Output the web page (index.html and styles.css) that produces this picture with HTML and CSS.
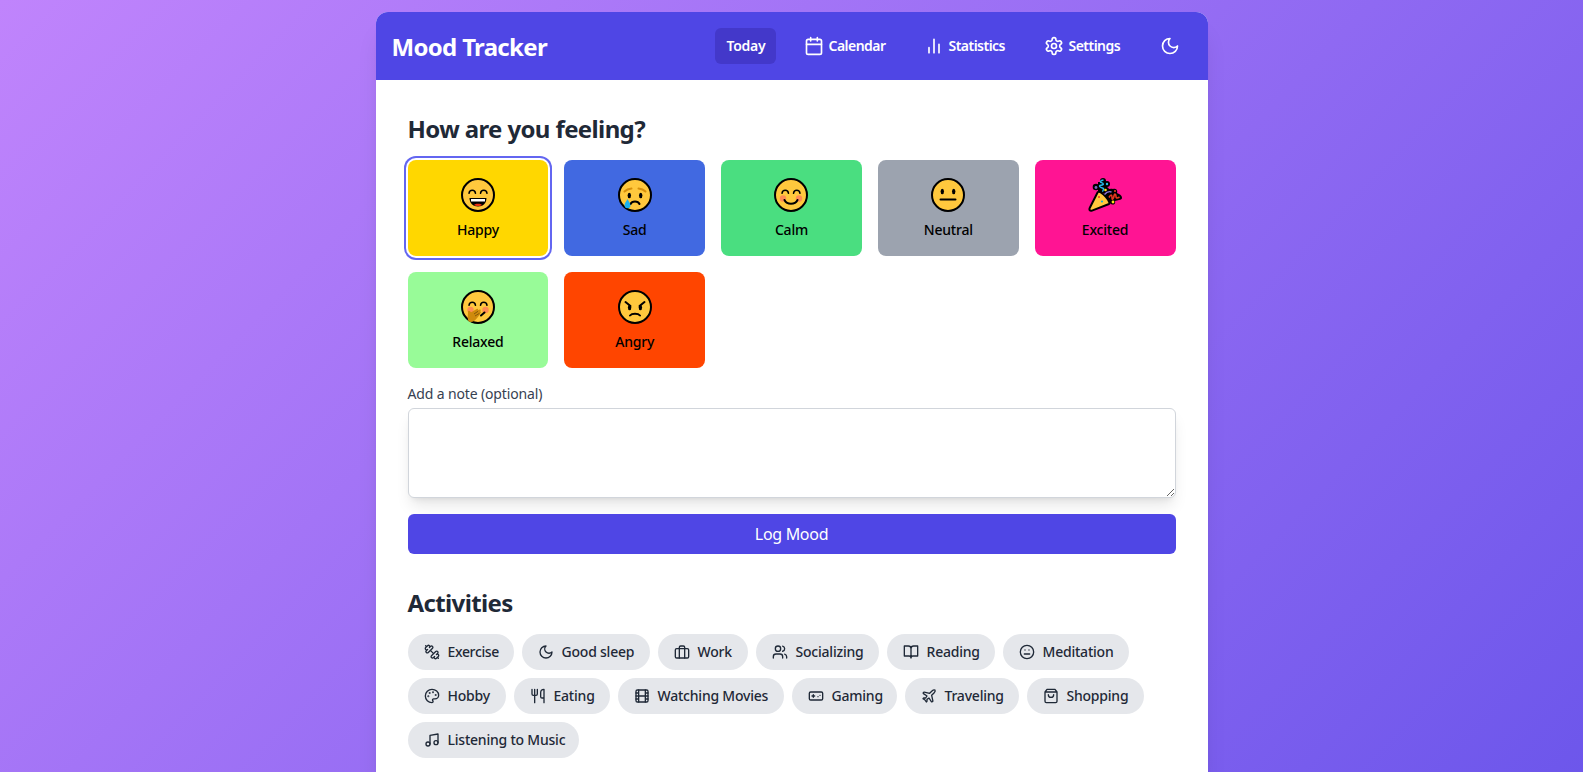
FILE: index.html
```html
<!DOCTYPE html>
<html lang="en">
<head>
<meta charset="utf-8">
<title>Mood Tracker</title>
<link rel="stylesheet" href="styles.css">
</head>
<body>
<div class="page">
<div class="app">
  <header class="header">
    <h1 class="brand">Mood Tracker</h1>
    <nav class="nav">
      <button class="nav-btn active"><span class="t-today">Today</span></button>
      <button class="nav-btn"><svg class="icon" viewBox="0 0 24 24"><path d="M8 2v4M16 2v4M3 10h18"/><rect x="3" y="4" width="18" height="18" rx="2"/></svg><span class="t-calendar">Calendar</span></button>
      <button class="nav-btn"><svg class="icon" viewBox="0 0 24 24"><path d="M18 20V10M12 20V4M6 20v-6"/></svg><span class="t-statistics">Statistics</span></button>
      <button class="nav-btn"><svg class="icon" viewBox="0 0 24 24"><path d="M12.22 2h-.44a2 2 0 0 0-2 2v.18a2 2 0 0 1-1 1.73l-.43.25a2 2 0 0 1-2 0l-.15-.08a2 2 0 0 0-2.73.73l-.22.38a2 2 0 0 0 .73 2.73l.15.1a2 2 0 0 1 1 1.72v.51a2 2 0 0 1-1 1.74l-.15.09a2 2 0 0 0-.73 2.73l.22.38a2 2 0 0 0 2.73.73l.15-.08a2 2 0 0 1 2 0l.43.25a2 2 0 0 1 1 1.73V20a2 2 0 0 0 2 2h.44a2 2 0 0 0 2-2v-.18a2 2 0 0 1 1-1.73l.43-.25a2 2 0 0 1 2 0l.15.08a2 2 0 0 0 2.73-.73l.22-.39a2 2 0 0 0-.73-2.73l-.15-.08a2 2 0 0 1-1-1.74v-.5a2 2 0 0 1 1-1.74l.15-.09a2 2 0 0 0 .73-2.73l-.22-.38a2 2 0 0 0-2.73-.73l-.15.08a2 2 0 0 1-2 0l-.43-.25a2 2 0 0 1-1-1.73V4a2 2 0 0 0-2-2z"/><circle cx="12" cy="12" r="3"/></svg><span class="t-settings">Settings</span></button>
      <button class="nav-btn" aria-label="Toggle dark mode"><svg class="icon" viewBox="0 0 24 24"><path d="M12 3a6 6 0 0 0 9 9 9 9 0 1 1-9-9Z"/></svg></button>
    </nav>
  </header>
  <main class="content">
    <section>
      <h2 class="title">How are you feeling?</h2>
      <div class="moods">
        <button class="mood happy selected">
          <svg class="emoji" viewBox="0 0 34 34"><circle class="face" cx="17" cy="17" r="16"/><path class="line" d="M8 15.300c.5-4 6-4 6.500 0M19.500 15.300c.5-4 6-4 6.500 0"/><path d="M8.500 20h17c0 5-3.500 8.500-8.500 8.500S8.500 25 8.500 20Z"/><path fill="#fff" d="M10 21h14v2.500H10Z"/><path fill="#ea2f10" d="M13 27.200c1-1.900 7-1.900 8 0-2 1-6 1-8 0Z"/></svg>
          <span class="mood-name">Happy</span>
        </button>
        <button class="mood sad">
          <svg class="emoji" viewBox="0 0 34 34"><circle class="face" cx="17" cy="17" r="16"/><path class="brow" d="M6.500 13.500c1.500-1.500 4-2.700 7-3M27.500 13.500c-1.500-1.500-4-2.700-7-3"/><ellipse cx="11.300" cy="17.500" rx="1.700" ry="2.700"/><ellipse cx="22.700" cy="17.500" rx="1.700" ry="2.700"/><path class="line thick" d="M12.500 26c1.500-3.400 7.500-3.400 9 0"/><path fill="#1bb1f0" d="M9.500 21c1.500 3 3 4.300 3 6.300a3 3 0 0 1-6 0c0-2 1.500-3.300 3-6.300Z"/></svg>
          <span class="mood-name">Sad</span>
        </button>
        <button class="mood calm">
          <svg class="emoji" viewBox="0 0 34 34"><circle class="face" cx="17" cy="17" r="16"/><g class="cheek"><circle cx="9" cy="20.500" r="3.200"/><circle cx="25" cy="20.500" r="3.200"/></g><path class="line" d="M8 15.300c.5-4 6-4 6.500 0M19.500 15.300c.5-4 6-4 6.500 0"/><path class="line thick" d="M10.500 22c2.500 5 10.500 5 13 0"/></svg>
          <span class="mood-name">Calm</span>
        </button>
        <button class="mood neutral">
          <svg class="emoji" viewBox="0 0 34 34"><circle class="face" cx="17" cy="17" r="16"/><ellipse cx="11.300" cy="13.500" rx="1.700" ry="2.700"/><ellipse cx="22.700" cy="13.500" rx="1.700" ry="2.700"/><path class="line thick" d="M9.500 21.500h15"/></svg>
          <span class="mood-name">Neutral</span>
        </button>
        <button class="mood excited">
          <svg class="emoji" viewBox="0 0 34 34"><g><circle cx="8" cy="9" r="3.300"/><circle cx="15" cy="3" r="3"/><circle cx="19" cy="6" r="3"/><path d="M10 4h9v11h-9Z"/><circle cx="18" cy="12" r="3"/><path d="M16 14c3-3 6-3.500 9-3 3-1 5 1 4 4l2 1c4 2 4 6 0 6l-4 1c1 4-3 4.500-5 2l-6-5Z"/></g><path fill="#ffc83d" stroke="#000" stroke-width="2" stroke-linejoin="round" d="M9.800 14 1.700 30c-.8 2 .3 3.200 2.300 2.600L21 26c2.700-1.500-8-14-11.200-12Z"/><g fill="none" stroke-width="1.400"><path stroke="#26b8ea" d="M15.500 2c-3 .5-4 2-2 2.700s3 2-.5 2.500 0 2.500 2 3-1 2.500 0 3.500"/><path stroke="#8b72d8" d="M16.500 16.500c2-2.500 4-3.500 7-2.500"/><path stroke="#e8371f" stroke-width="1.600" d="M21 19.500c2-3.500 3-3 3 0s1.500 1.500 2-1.500 2-2 2 .5 2 1.500 3.500.5"/></g><circle cx="8" cy="9.500" r="1.400" fill="#7965c5"/><circle cx="19" cy="6" r="1.200" fill="#26b8ea"/><circle cx="17.500" cy="12" r="1.300" fill="#ffe11a"/><circle cx="25" cy="24" r="1.400" fill="#ffe11a"/><circle cx="27" cy="13" r="1.100" fill="#e8371f"/><circle cx="11" cy="19" r="1" fill="#e8371f"/><circle cx="14" cy="23.500" r="1.100" fill="#1bb1d0"/></svg>
          <span class="mood-name">Excited</span>
        </button>
        <button class="mood relaxed">
          <svg class="emoji" viewBox="0 0 34 34"><circle class="face" cx="17" cy="17" r="16"/><g class="cheek"><circle cx="9.500" cy="20" r="3.200"/><circle cx="24.500" cy="20" r="3.200"/></g><path class="line" d="M8 15.300c.5-4 6-4 6.500 0M19.500 15.300c.5-4 6-4 6.500 0"/><path class="line thick" d="m20 25.500 3.500-3"/><path fill="#cf8a0c" d="M7 22c0-1.500 1.500-1.500 2.200-.5l1 .7 5.500-3.200c1.300-.5 2 .5 1 1.300l2-.8c1.300-.3 1.500 1 .5 1.500l.5.800c.7.800 0 1.400-.8 1.800.5.900 0 1.400-.8 1.800l-2 2.500c-2.500 3.500-5 4.500-7.900 3.900C6 30 7 25 7 22Z"/><path fill="none" stroke="#85590a" d="m13 24 4-2.700M14 26l4.500-2.700"/></svg>
          <span class="mood-name">Relaxed</span>
        </button>
        <button class="mood angry">
          <svg class="emoji" viewBox="0 0 34 34"><circle class="face" cx="17" cy="17" r="16"/><path class="line thick" d="m7.500 12 5 4M26.500 12l-5 4"/><ellipse cx="11.600" cy="17.500" rx="1.700" ry="2.700"/><ellipse cx="22.400" cy="17.500" rx="1.700" ry="2.700"/><path class="line thick" d="M12 25.500c2-2.500 8-2.500 10 0"/></svg>
          <span class="mood-name">Angry</span>
        </button>
      </div>
      <label class="note-label" for="note">Add a note (optional)</label>
      <textarea class="note" id="note"></textarea>
      <button class="log">Log Mood</button>
    </section>
    <section class="activities">
      <h2 class="title">Activities</h2>
      <div class="chips">
        <button class="chip exercise"><svg class="icon" viewBox="0 0 24 24"><path d="M14.400 14.400 9.600 9.600M18.657 21.485a2 2 0 1 1-2.829-2.828l-1.767 1.768a2 2 0 1 1-2.829-2.829l6.364-6.364a2 2 0 1 1 2.829 2.829l-1.768 1.767a2 2 0 1 1 2.828 2.829zM21.500 21.500l-1.400-1.400M3.900 3.900 2.500 2.500M6.404 12.768a2 2 0 1 1-2.829-2.829l1.768-1.767a2 2 0 1 1-2.828-2.829l2.828-2.828a2 2 0 1 1 2.829 2.828l1.767-1.768a2 2 0 1 1 2.829 2.829z"/></svg><span>Exercise</span></button>
        <button class="chip sleep"><svg class="icon" viewBox="0 0 24 24"><path d="M12 3a6 6 0 0 0 9 9 9 9 0 1 1-9-9Z"/></svg><span>Good sleep</span></button>
        <button class="chip work"><svg class="icon" viewBox="0 0 24 24"><rect x="2" y="7" width="20" height="14" rx="2"/><path d="M16 21V5a2 2 0 0 0-2-2h-4a2 2 0 0 0-2 2v16"/></svg><span>Work</span></button>
        <button class="chip social"><svg class="icon" viewBox="0 0 24 24"><path d="M16 21v-2a4 4 0 0 0-4-4H6a4 4 0 0 0-4 4v2M22 21v-2a4 4 0 0 0-3-3.870M16 3.130a4 4 0 0 1 0 7.750"/><circle cx="9" cy="7" r="4"/></svg><span>Socializing</span></button>
        <button class="chip reading"><svg class="icon" viewBox="0 0 24 24"><path d="M2 3h6a4 4 0 0 1 4 4v14a3 3 0 0 0-3-3H2zM22 3h-6a4 4 0 0 0-4 4v14a3 3 0 0 1 3-3h7z"/></svg><span>Reading</span></button>
        <button class="chip meditation"><svg class="icon" viewBox="0 0 24 24"><circle cx="12" cy="12" r="10"/><path d="M8 15h8M9 9h.01M15 9h.01"/></svg><span>Meditation</span></button>
        <button class="chip hobby"><svg class="icon" viewBox="0 0 24 24"><g fill="currentColor"><circle cx="13.500" cy="6.500" r=".5"/><circle cx="17.500" cy="10.500" r=".5"/><circle cx="8.500" cy="7.500" r=".5"/><circle cx="6.500" cy="12.500" r=".5"/></g><path d="M12 2C6.500 2 2 6.500 2 12s4.500 10 10 10c.926 0 1.648-.746 1.648-1.688 0-.437-.18-.835-.437-1.125-.29-.289-.438-.652-.438-1.125a1.640 1.640 0 0 1 1.668-1.668h1.996c3.051 0 5.555-2.503 5.555-5.554C21.965 6.012 17.461 2 12 2z"/></svg><span>Hobby</span></button>
        <button class="chip eating"><svg class="icon" viewBox="0 0 24 24"><path d="M3 2v7c0 1.100.9 2 2 2h4a2 2 0 0 0 2-2V2M7 2v20M21 15V2a5 5 0 0 0-5 5v6c0 1.100.9 2 2 2h3Zm0 0v7"/></svg><span>Eating</span></button>
        <button class="chip movies"><svg class="icon" viewBox="0 0 24 24"><rect x="3" y="3" width="18" height="18" rx="2"/><path d="M7 3v18M3 7.500h4M3 12h18M3 16.500h4M17 3v18M17 7.500h4M17 16.500h4"/></svg><span>Watching Movies</span></button>
        <button class="chip gaming"><svg class="icon" viewBox="0 0 24 24"><path d="M6 12h4M8 10v4M15 13h.01M18 11h.01"/><rect x="2" y="6" width="20" height="12" rx="2"/></svg><span>Gaming</span></button>
        <button class="chip traveling"><svg class="icon" viewBox="0 0 24 24"><path d="M17.800 19.200 16 11l3.500-3.500C21 6 21.500 4 21 3c-1-.5-3 0-4.500 1.500L13 8 4.800 6.200c-.5-.1-.9.1-1.100.5l-.3.5c-.2.5-.1 1 .3 1.300L9 12l-2 3H4l-1 1 3 2 2 3 1-1v-3l3-2 3.500 5.300c.3.4.8.5 1.300.3l.5-.2c.4-.3.6-.7.5-1.200z"/></svg><span>Traveling</span></button>
        <button class="chip shopping"><svg class="icon" viewBox="0 0 24 24"><path d="M6 2 3 6v14a2 2 0 0 0 2 2h14a2 2 0 0 0 2-2V6l-3-4ZM3 6h18M16 10a4 4 0 0 1-8 0"/></svg><span>Shopping</span></button>
        <button class="chip music"><svg class="icon" viewBox="0 0 24 24"><path d="M9 18V5l12-2v13"/><circle cx="6" cy="18" r="3"/><circle cx="18" cy="16" r="3"/></svg><span>Listening to Music</span></button>
      </div>
    </section>
  </main>
</div>
</div>
</body>
</html>
```
FILE: styles.css
```css
* { box-sizing: border-box; margin: 0; }
body { font-family: "Noto Sans", "Open Sans", sans-serif; color: #1f2937; }
button { border: 0; font: inherit; color: inherit; background: none; padding: 0; }
.page { height: 100vh; padding-top: 12px; overflow: hidden; background: linear-gradient(to bottom right, #c084fc, #4f46e5) 0 0 / 100% 1640px no-repeat; }
.app { width: 832px; height: 100%; margin: 0 auto; background: #fff; border-radius: 12px 12px 0 0; overflow: hidden; box-shadow: 0 20px 25px -5px rgba(0,0,0,.1), 0 8px 10px -6px rgba(0,0,0,.1); }
.icon { flex: none; width: 16px; height: 16px; fill: none; stroke: currentColor; stroke-width: 2; stroke-linecap: round; stroke-linejoin: round; }
.header { height: 68px; padding: 16px; display: flex; align-items: center; justify-content: space-between; background: #4f46e5; color: #fff; }
.brand { padding-top: 2px; font-size: 24px; line-height: 32px; font-weight: 700; letter-spacing: -.68px; white-space: nowrap; }
.nav { display: flex; gap: 16px; }
.nav-btn { height: 36px; padding: 0 12px; display: flex; align-items: center; gap: 5px; border-radius: 6px; font-size: 14px; line-height: 20px; font-weight: 600; }
.nav-btn span { white-space: nowrap; letter-spacing: -.52px; }
.nav-btn .icon { width: 20px; height: 20px; }
.active { background: #4338ca; }
.nav-btn .t-today { width: 37px; letter-spacing: -.3px; }
.t-calendar { width: 55px; }
.t-statistics { width: 55px; }
.t-settings { width: 51px; }
.content { padding: 32px; }
.title { padding-top: 1px; font-size: 24px; line-height: 32px; font-weight: 700; letter-spacing: -.62px; margin-bottom: 15px; white-space: nowrap; }
.moods { display: grid; grid-template-columns: repeat(5, 1fr); gap: 16px; }
.mood { height: 96px; padding: 18px 0 0; display: flex; flex-direction: column; align-items: center; gap: 8px; border-radius: 8px; color: #000; }
.emoji { width: 34px; height: 34px; }
.mood-name { font-size: 14px; line-height: 20px; font-weight: 470; letter-spacing: -.2px; }
.selected { box-shadow: 0 0 0 2px #fff, 0 0 0 4px #6366f1; }
.happy { background: #ffd700; }
.sad { background: #4169e1; }
.calm { background: #4ade80; }
.neutral { background: #9ca3af; }
.excited { background: #ff1493; }
.relaxed { background: #98fb98; }
.angry { background: #ff4500; }
.face { fill: #ffc83d; stroke: #000; stroke-width: 2; }
.line { fill: none; stroke: #000; stroke-width: 1.5; stroke-linecap: round; }
.thick { stroke-width: 2; }
.brow { fill: none; stroke: #d68f0c; stroke-width: 2; stroke-linecap: round; }
.cheek { fill: #ff8257; opacity: .85; }
.note-label { display: block; margin-top: 16px; font-size: 14px; line-height: 20px; font-weight: 440; letter-spacing: -.14px; color: #374151; }
.note { display: block; width: 100%; height: 90px; margin-top: 4px; border: 1px solid #d1d5db; border-radius: 6px; background: #fff; resize: vertical; box-shadow: 0 10px 15px -3px rgba(0,0,0,.1), 0 4px 6px -4px rgba(0,0,0,.1); }
.log { position: relative; display: block; width: 100%; height: 40px; margin-top: 16px; border-radius: 6px; background: #4f46e5; color: #fff; font-size: 16px; line-height: 24px; letter-spacing: -.3px; }
.activities { margin-top: 32px; }
.chips { display: flex; flex-wrap: wrap; gap: 8px; }
.chip { height: 36px; padding: 0 0 0 16px; display: flex; align-items: center; gap: 8px; border-radius: 18px; background: #e5e7eb; font-size: 14px; line-height: 20px; font-weight: 470; letter-spacing: -.22px; white-space: nowrap; }
.exercise { width: 106px; letter-spacing: -.35px; }
.sleep { width: 128px; }
.work { width: 90px; }
.social { width: 123px; }
.reading { width: 108px; }
.meditation { width: 126px; }
.hobby { width: 98px; }
.eating { width: 96px; }
.movies { width: 166px; }
.gaming { width: 105px; }
.traveling { width: 114px; }
.shopping { width: 117px; }
.music { width: 171px; }
```
